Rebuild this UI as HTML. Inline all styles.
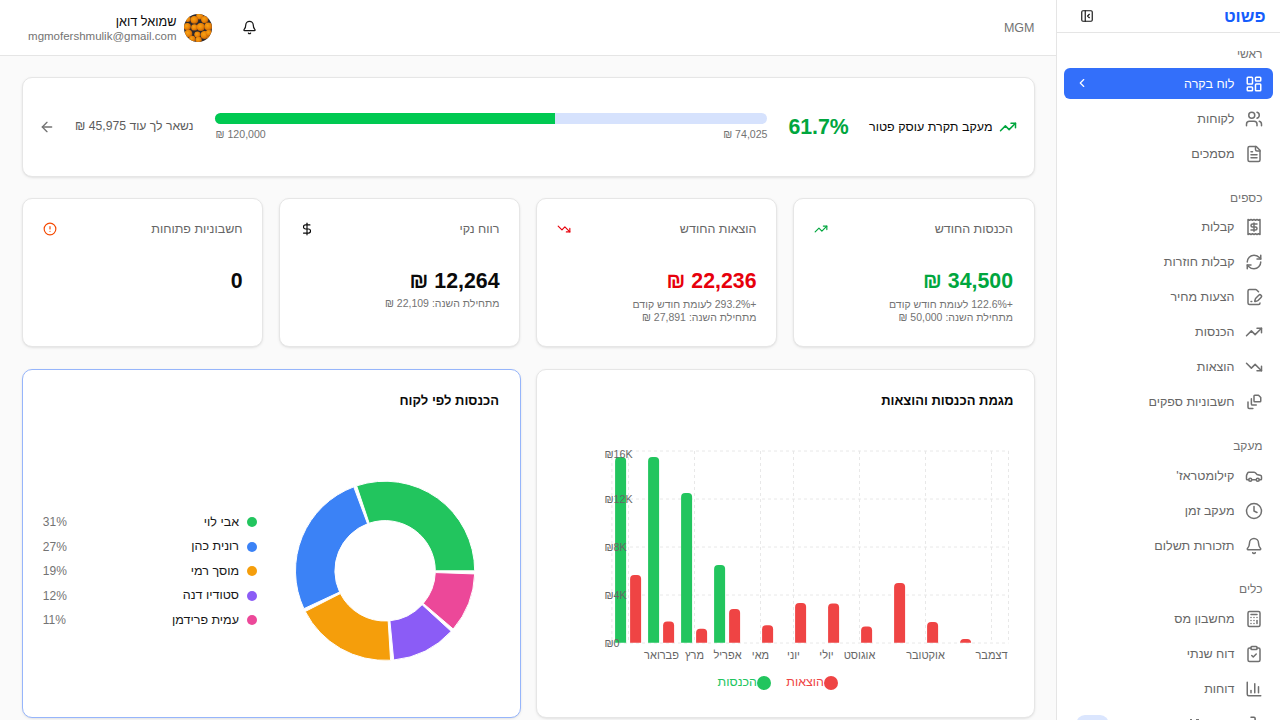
<!DOCTYPE html>
<html lang="he"><head><meta charset="utf-8"><title>פשוט - לוח בקרה</title>
<style>
html,body{margin:0;padding:0;width:1280px;height:720px;overflow:hidden;background:#fafafa;font-family:"Liberation Sans", sans-serif}
.t{position:absolute;white-space:nowrap}
svg text{font-family:"Liberation Sans", sans-serif}
</style></head><body>
<div style="position:absolute;left:0px;top:0px;width:1056px;height:55px;background:#fff;border-bottom:1px solid #e5e5e5"></div><div class="t" dir="ltr" style="right:245.50px;top:22.25px;font-size:12.5px;line-height:12.5px;color:#737373;font-weight:400;">MGM</div><svg style="position:absolute;left:241.50px;top:20.30px" width="15" height="15" viewBox="0 0 24 24" fill="none" stroke="#171717" stroke-width="2" stroke-linecap="round" stroke-linejoin="round"><path d="M10.268 21a2 2 0 0 0 3.464 0"/><path d="M3.262 15.326A1 1 0 0 0 4 17h16a1 1 0 0 0 .74-1.673C19.41 13.956 18 12.499 18 8A6 6 0 0 0 6 8c0 4.499-1.411 5.956-2.738 7.326"/></svg><div style="position:absolute;left:184px;top:14px;width:28px;height:28px;border-radius:50%;overflow:hidden"><svg width="28" height="28" viewBox="0 0 28 28"><defs><radialGradient id="og" cx="40%" cy="40%" r="65%"><stop offset="0" stop-color="#f8a414"/><stop offset="0.6" stop-color="#e98208"/><stop offset="1" stop-color="#b55a06"/></radialGradient></defs><rect width="28" height="28" fill="#2c2a2e"/><circle cx="15.8" cy="2" r="3.6" fill="url(#og)"/><circle cx="10.4" cy="5.8" r="3.9" fill="url(#og)"/><circle cx="20.7" cy="5.6" r="3.6" fill="url(#og)"/><circle cx="3.8" cy="5.1" r="3" fill="url(#og)"/><circle cx="3.3" cy="12.6" r="3.6" fill="url(#og)"/><circle cx="10.4" cy="13.4" r="3.2" fill="url(#og)"/><circle cx="16.8" cy="13" r="4" fill="url(#og)"/><circle cx="24.4" cy="12.4" r="4" fill="url(#og)"/><circle cx="4.4" cy="19.6" r="3.9" fill="url(#og)"/><circle cx="13.4" cy="20.6" r="3.1" fill="url(#og)"/><circle cx="20.6" cy="21" r="4" fill="url(#og)"/><circle cx="8.2" cy="25" r="3.2" fill="url(#og)"/><circle cx="14.6" cy="26" r="3.2" fill="url(#og)"/><circle cx="25" cy="19" r="3.2" fill="url(#og)"/><circle cx="26" cy="25" r="3" fill="url(#og)"/></svg></div><div class="t" dir="rtl" style="right:1103.50px;top:16.02px;font-size:12.7px;line-height:12.7px;color:#0a0a0a;font-weight:400;">שמואל דואן</div><div class="t" dir="ltr" style="right:1103.50px;top:30.84px;font-size:11.5px;line-height:11.5px;color:#737373;font-weight:400;">mgmofershmulik@gmail.com</div><div style="position:absolute;left:1056px;top:0px;width:224px;height:720px;background:#fff;border-left:1px solid #e5e5e5;box-sizing:border-box"></div><div style="position:absolute;left:1057px;top:32px;width:223px;height:1px;background:#e5e5e5"></div><div class="t" dir="rtl" style="right:14.50px;top:8.35px;font-size:17px;line-height:17px;color:#155dfc;font-weight:700;">פשוט</div><svg style="position:absolute;left:1080.00px;top:8.90px" width="14" height="14" viewBox="0 0 24 24" fill="none" stroke="#171717" stroke-width="2" stroke-linecap="round" stroke-linejoin="round"><rect width="18" height="18" x="3" y="3" rx="2"/><path d="M9 3v18"/><path d="m16 15-3-3 3-3"/></svg><div class="t" dir="rtl" style="right:17.50px;top:48.20px;font-size:12px;line-height:12px;color:#737373;font-weight:400;">ראשי</div><div style="position:absolute;left:1064px;top:68.3px;width:209px;height:31px;background:#336ffa;border-radius:6px"></div><svg style="position:absolute;left:1244.70px;top:74.80px" width="18" height="18" viewBox="0 0 24 24" fill="none" stroke="#fff" stroke-width="2" stroke-linecap="round" stroke-linejoin="round"><rect width="7" height="9" x="3" y="3" rx="1"/><rect width="7" height="5" x="14" y="3" rx="1"/><rect width="7" height="9" x="14" y="12" rx="1"/><rect width="7" height="5" x="3" y="16" rx="1"/></svg><div class="t" dir="rtl" style="right:45.50px;top:77.62px;font-size:12.5px;line-height:12.5px;color:#fff;font-weight:400;">לוח בקרה</div><svg style="position:absolute;left:1075.00px;top:76.00px" width="14" height="14" viewBox="0 0 24 24" fill="none" stroke="#fff" stroke-width="2" stroke-linecap="round" stroke-linejoin="round"><path d="m15 18-6-6 6-6"/></svg><svg style="position:absolute;left:1244.70px;top:110.00px" width="18" height="18" viewBox="0 0 24 24" fill="none" stroke="#707070" stroke-width="2" stroke-linecap="round" stroke-linejoin="round"><path d="M16 21v-2a4 4 0 0 0-4-4H6a4 4 0 0 0-4 4v2"/><circle cx="9" cy="7" r="4"/><path d="M22 21v-2a4 4 0 0 0-3-3.87"/><path d="M16 3.13a4 4 0 0 1 0 7.75"/></svg><div class="t" dir="rtl" style="right:45.50px;top:112.83px;font-size:12.5px;line-height:12.5px;color:#666;font-weight:400;">לקוחות</div><svg style="position:absolute;left:1244.70px;top:145.00px" width="18" height="18" viewBox="0 0 24 24" fill="none" stroke="#707070" stroke-width="2" stroke-linecap="round" stroke-linejoin="round"><path d="M15 2H6a2 2 0 0 0-2 2v16a2 2 0 0 0 2 2h12a2 2 0 0 0 2-2V7Z"/><path d="M14 2v4a2 2 0 0 0 2 2h4"/><path d="M10 9H8"/><path d="M16 13H8"/><path d="M16 17H8"/></svg><div class="t" dir="rtl" style="right:45.50px;top:147.82px;font-size:12.5px;line-height:12.5px;color:#666;font-weight:400;">מסמכים</div><div class="t" dir="rtl" style="right:17.50px;top:191.60px;font-size:12px;line-height:12px;color:#737373;font-weight:400;">כספים</div><svg style="position:absolute;left:1244.70px;top:217.80px" width="18" height="18" viewBox="0 0 24 24" fill="none" stroke="#707070" stroke-width="2" stroke-linecap="round" stroke-linejoin="round"><path d="M4 2v20l2-1 2 1 2-1 2 1 2-1 2 1 2-1 2 1V2l-2 1-2-1-2 1-2-1-2 1-2-1-2 1Z"/><path d="M16 8h-6a2 2 0 1 0 0 4h4a2 2 0 1 1 0 4H8"/><path d="M12 17.5v-11"/></svg><div class="t" dir="rtl" style="right:45.50px;top:220.62px;font-size:12.5px;line-height:12.5px;color:#666;font-weight:400;">קבלות</div><svg style="position:absolute;left:1244.70px;top:252.80px" width="18" height="18" viewBox="0 0 24 24" fill="none" stroke="#707070" stroke-width="2" stroke-linecap="round" stroke-linejoin="round"><path d="M3 12a9 9 0 0 1 9-9 9.75 9.75 0 0 1 6.74 2.74L21 8"/><path d="M21 3v5h-5"/><path d="M21 12a9 9 0 0 1-9 9 9.75 9.75 0 0 1-6.74-2.74L3 16"/><path d="M8 16H3v5"/></svg><div class="t" dir="rtl" style="right:45.50px;top:255.62px;font-size:12.5px;line-height:12.5px;color:#666;font-weight:400;">קבלות חוזרות</div><svg style="position:absolute;left:1244.70px;top:287.80px" width="18" height="18" viewBox="0 0 24 24" fill="none" stroke="#707070" stroke-width="2" stroke-linecap="round" stroke-linejoin="round"><path d="m18 5-2.414-2.414A2 2 0 0 0 14.172 2H6a2 2 0 0 0-2 2v16a2 2 0 0 0 2 2h12a2 2 0 0 0 2-2"/><path d="M21.378 12.626a1 1 0 0 0-3.004-3.004l-4.01 4.012a2 2 0 0 0-.506.854l-.837 2.87a.5.5 0 0 0 .62.62l2.87-.837a2 2 0 0 0 .854-.506z"/><path d="M8 18h1"/></svg><div class="t" dir="rtl" style="right:45.50px;top:290.62px;font-size:12.5px;line-height:12.5px;color:#666;font-weight:400;">הצעות מחיר</div><svg style="position:absolute;left:1244.70px;top:322.80px" width="18" height="18" viewBox="0 0 24 24" fill="none" stroke="#707070" stroke-width="2" stroke-linecap="round" stroke-linejoin="round"><polyline points="22 7 13.5 15.5 8.5 10.5 2 17"/><polyline points="16 7 22 7 22 13"/></svg><div class="t" dir="rtl" style="right:45.50px;top:325.62px;font-size:12.5px;line-height:12.5px;color:#666;font-weight:400;">הכנסות</div><svg style="position:absolute;left:1244.70px;top:357.80px" width="18" height="18" viewBox="0 0 24 24" fill="none" stroke="#707070" stroke-width="2" stroke-linecap="round" stroke-linejoin="round"><polyline points="22 17 13.5 8.5 8.5 13.5 2 7"/><polyline points="16 17 22 17 22 11"/></svg><div class="t" dir="rtl" style="right:45.50px;top:360.62px;font-size:12.5px;line-height:12.5px;color:#666;font-weight:400;">הוצאות</div><svg style="position:absolute;left:1244.70px;top:392.80px" width="18" height="18" viewBox="0 0 24 24" fill="none" stroke="#707070" stroke-width="2" stroke-linecap="round" stroke-linejoin="round"><path d="M13 3h5l3 3v4.5a1 1 0 0 1-1 1h-7a1 1 0 0 1-1-1V4a1 1 0 0 1 1-1z"/><path d="M8.5 7.5v7a1.5 1.5 0 0 0 1.5 1.5H15"/><path d="M4 12v7a1.5 1.5 0 0 0 1.5 1.5H10.5"/></svg><div class="t" dir="rtl" style="right:45.50px;top:395.62px;font-size:12.5px;line-height:12.5px;color:#666;font-weight:400;">חשבוניות ספקים</div><div class="t" dir="rtl" style="right:17.50px;top:440.30px;font-size:12px;line-height:12px;color:#737373;font-weight:400;">מעקב</div><svg style="position:absolute;left:1244.70px;top:467.00px" width="18" height="18" viewBox="0 0 24 24" fill="none" stroke="#707070" stroke-width="2" stroke-linecap="round" stroke-linejoin="round"><path d="M19 17h2c.6 0 1-.4 1-1v-3c0-.9-.7-1.7-1.5-1.9C18.7 10.6 16 10 16 10s-1.3-1.4-2.2-2.3c-.5-.4-1.1-.7-1.8-.7H5c-.6 0-1.1.4-1.4.9l-1.4 2.9A3.7 3.7 0 0 0 2 12v4c0 .6.4 1 1 1h2"/><circle cx="7" cy="17" r="2"/><path d="M9 17h6"/><circle cx="17" cy="17" r="2"/></svg><div class="t" dir="rtl" style="right:45.50px;top:469.82px;font-size:12.5px;line-height:12.5px;color:#666;font-weight:400;">קילומטראז'</div><svg style="position:absolute;left:1244.70px;top:501.80px" width="18" height="18" viewBox="0 0 24 24" fill="none" stroke="#707070" stroke-width="2" stroke-linecap="round" stroke-linejoin="round"><circle cx="12" cy="12" r="10"/><polyline points="12 6 12 12 16 14"/></svg><div class="t" dir="rtl" style="right:45.50px;top:504.62px;font-size:12.5px;line-height:12.5px;color:#666;font-weight:400;">מעקב זמן</div><svg style="position:absolute;left:1244.70px;top:536.80px" width="18" height="18" viewBox="0 0 24 24" fill="none" stroke="#707070" stroke-width="2" stroke-linecap="round" stroke-linejoin="round"><path d="M10.268 21a2 2 0 0 0 3.464 0"/><path d="M3.262 15.326A1 1 0 0 0 4 17h16a1 1 0 0 0 .74-1.673C19.41 13.956 18 12.499 18 8A6 6 0 0 0 6 8c0 4.499-1.411 5.956-2.738 7.326"/></svg><div class="t" dir="rtl" style="right:45.50px;top:539.62px;font-size:12.5px;line-height:12.5px;color:#666;font-weight:400;">תזכורות תשלום</div><div class="t" dir="rtl" style="right:17.50px;top:583.30px;font-size:12px;line-height:12px;color:#737373;font-weight:400;">כלים</div><svg style="position:absolute;left:1244.70px;top:610.00px" width="18" height="18" viewBox="0 0 24 24" fill="none" stroke="#707070" stroke-width="2" stroke-linecap="round" stroke-linejoin="round"><rect width="16" height="20" x="4" y="2" rx="2"/><line x1="8" x2="16" y1="6" y2="6"/><line x1="16" x2="16" y1="14" y2="18"/><path d="M16 10h.01"/><path d="M12 10h.01"/><path d="M8 10h.01"/><path d="M12 14h.01"/><path d="M8 14h.01"/><path d="M12 18h.01"/><path d="M8 18h.01"/></svg><div class="t" dir="rtl" style="right:45.50px;top:612.83px;font-size:12.5px;line-height:12.5px;color:#666;font-weight:400;">מחשבון מס</div><svg style="position:absolute;left:1244.70px;top:645.00px" width="18" height="18" viewBox="0 0 24 24" fill="none" stroke="#707070" stroke-width="2" stroke-linecap="round" stroke-linejoin="round"><rect width="8" height="4" x="8" y="2" rx="1" ry="1"/><path d="M16 4h2a2 2 0 0 1 2 2v14a2 2 0 0 1-2 2H6a2 2 0 0 1-2-2V6a2 2 0 0 1 2-2h2"/><path d="m9 14 2 2 4-4"/></svg><div class="t" dir="rtl" style="right:45.50px;top:647.83px;font-size:12.5px;line-height:12.5px;color:#666;font-weight:400;">דוח שנתי</div><svg style="position:absolute;left:1244.70px;top:680.00px" width="18" height="18" viewBox="0 0 24 24" fill="none" stroke="#707070" stroke-width="2" stroke-linecap="round" stroke-linejoin="round"><path d="M3 3v16a2 2 0 0 0 2 2h16"/><path d="M18 17V9"/><path d="M13 17V5"/><path d="M8 17v-3"/></svg><div class="t" dir="rtl" style="right:45.50px;top:682.83px;font-size:12.5px;line-height:12.5px;color:#666;font-weight:400;">דוחות</div><svg style="position:absolute;left:1244.7px;top:715px" width="18" height="18" viewBox="0 0 24 24" fill="none" stroke="#6b6b6b" stroke-width="2" stroke-linecap="round"><path d="M8 3h4a1.5 1.5 0 0 1 1.5 1.5v4"/></svg><div style="position:absolute;left:1190px;top:718.6px;width:2px;height:2px;background:#777"></div><div style="position:absolute;left:1195.5px;top:718.6px;width:3.5px;height:2px;background:#777"></div><div style="position:absolute;left:1076px;top:715px;width:33px;height:18px;background:#dbe6fe;border-radius:9px"></div><div style="position:absolute;left:21.5px;top:77px;width:1013px;height:99.5px;background:#fff;border:1px solid #e6e6e6;border-radius:10px;box-shadow:0 1px 3px 0 rgba(0,0,0,.08),0 1px 2px -1px rgba(0,0,0,.08);box-sizing:border-box"></div><svg style="position:absolute;left:999.00px;top:118.00px" width="18" height="18" viewBox="0 0 24 24" fill="none" stroke="#00a63e" stroke-width="2" stroke-linecap="round" stroke-linejoin="round"><polyline points="22 7 13.5 15.5 8.5 10.5 2 17"/><polyline points="16 7 22 7 22 13"/></svg><div class="t" dir="rtl" style="right:287.50px;top:120.62px;font-size:12.5px;line-height:12.5px;color:#0a0a0a;font-weight:400;">מעקב תקרת עוסק פטור</div><div class="t" dir="ltr" style="right:431.20px;top:117.25px;font-size:21.3px;line-height:21.3px;color:#00a63e;font-weight:700;">61.7%</div><div style="position:absolute;left:215px;top:113px;width:552px;height:11px;background:#d6e2fd;border-radius:6px;overflow:hidden"></div><div style="position:absolute;left:215px;top:113px;width:340.2px;height:11px;background:#00c951;border-radius:6px 0 0 6px"></div><div class="t" dir="rtl" style="right:512.50px;top:128.70px;font-size:10.6px;line-height:10.6px;color:#737373;font-weight:400;">74,025 ₪</div><div class="t" dir="rtl" style="left:215.50px;top:128.70px;font-size:10.6px;line-height:10.6px;color:#737373;font-weight:400;">120,000 ₪</div><div class="t" dir="rtl" style="right:1086.50px;top:120.19px;font-size:12.2px;line-height:12.2px;color:#5c5c5c;font-weight:400;">נשאר לך עוד 45,975 ₪</div><svg style="position:absolute;left:38.70px;top:119.00px" width="16" height="16" viewBox="0 0 24 24" fill="none" stroke="#737373" stroke-width="2" stroke-linecap="round" stroke-linejoin="round"><path d="m12 19-7-7 7-7"/><path d="M19 12H5"/></svg><div style="position:absolute;left:21.5px;top:198px;width:241.5px;height:148.5px;background:#fff;border:1px solid #e6e6e6;border-radius:10px;box-shadow:0 1px 3px 0 rgba(0,0,0,.08),0 1px 2px -1px rgba(0,0,0,.08);box-sizing:border-box"></div><div style="position:absolute;left:278.5px;top:198px;width:241.5px;height:148.5px;background:#fff;border:1px solid #e6e6e6;border-radius:10px;box-shadow:0 1px 3px 0 rgba(0,0,0,.08),0 1px 2px -1px rgba(0,0,0,.08);box-sizing:border-box"></div><div style="position:absolute;left:535.5px;top:198px;width:241.5px;height:148.5px;background:#fff;border:1px solid #e6e6e6;border-radius:10px;box-shadow:0 1px 3px 0 rgba(0,0,0,.08),0 1px 2px -1px rgba(0,0,0,.08);box-sizing:border-box"></div><div style="position:absolute;left:793px;top:198px;width:241.5px;height:148.5px;background:#fff;border:1px solid #e6e6e6;border-radius:10px;box-shadow:0 1px 3px 0 rgba(0,0,0,.08),0 1px 2px -1px rgba(0,0,0,.08);box-sizing:border-box"></div><div class="t" dir="rtl" style="right:267.00px;top:222.62px;font-size:12.5px;line-height:12.5px;color:#666;font-weight:400;">הכנסות החודש</div><svg style="position:absolute;left:814.25px;top:221.60px" width="14" height="14" viewBox="0 0 24 24" fill="none" stroke="#00a63e" stroke-width="2" stroke-linecap="round" stroke-linejoin="round"><polyline points="22 7 13.5 15.5 8.5 10.5 2 17"/><polyline points="16 7 22 7 22 13"/></svg><div class="t" dir="rtl" style="right:267.00px;top:271.45px;font-size:21.3px;line-height:21.3px;color:#00a63e;font-weight:700;">34,500 ₪</div><div class="t" dir="rtl" style="right:267.00px;top:298.73px;font-size:10.5px;line-height:10.5px;color:#737373;font-weight:400;">+122.6% לעומת חודש קודם</div><div class="t" dir="rtl" style="right:267.00px;top:312.23px;font-size:10.5px;line-height:10.5px;color:#737373;font-weight:400;">מתחילת השנה: 50,000 ₪</div><div class="t" dir="rtl" style="right:523.50px;top:222.62px;font-size:12.5px;line-height:12.5px;color:#666;font-weight:400;">הוצאות החודש</div><svg style="position:absolute;left:557.10px;top:222.00px" width="14" height="14" viewBox="0 0 24 24" fill="none" stroke="#e7000b" stroke-width="2" stroke-linecap="round" stroke-linejoin="round"><polyline points="22 17 13.5 8.5 8.5 13.5 2 7"/><polyline points="16 17 22 17 22 11"/></svg><div class="t" dir="rtl" style="right:523.50px;top:271.45px;font-size:21.3px;line-height:21.3px;color:#e7000b;font-weight:700;">22,236 ₪</div><div class="t" dir="rtl" style="right:523.50px;top:298.73px;font-size:10.5px;line-height:10.5px;color:#737373;font-weight:400;">+293.2% לעומת חודש קודם</div><div class="t" dir="rtl" style="right:523.50px;top:312.23px;font-size:10.5px;line-height:10.5px;color:#737373;font-weight:400;">מתחילת השנה: 27,891 ₪</div><div class="t" dir="rtl" style="right:780.50px;top:222.62px;font-size:12.5px;line-height:12.5px;color:#666;font-weight:400;">רווח נקי</div><svg style="position:absolute;left:300.00px;top:222.00px" width="14" height="14" viewBox="0 0 24 24" fill="none" stroke="#0a0a0a" stroke-width="2" stroke-linecap="round" stroke-linejoin="round"><line x1="12" x2="12" y1="2" y2="22"/><path d="M17 5H9.5a3.5 3.5 0 0 0 0 7h5a3.5 3.5 0 0 1 0 7H6"/></svg><div class="t" dir="rtl" style="right:780.50px;top:271.35px;font-size:21.3px;line-height:21.3px;color:#0a0a0a;font-weight:700;">12,264 ₪</div><div class="t" dir="rtl" style="right:780.50px;top:298.43px;font-size:10.5px;line-height:10.5px;color:#737373;font-weight:400;">מתחילת השנה: 22,109 ₪</div><div class="t" dir="rtl" style="right:1037.50px;top:222.62px;font-size:12.5px;line-height:12.5px;color:#666;font-weight:400;">חשבוניות פתוחות</div><svg style="position:absolute;left:43.10px;top:222.00px" width="14" height="14" viewBox="0 0 24 24" fill="none" stroke="#f54900" stroke-width="2" stroke-linecap="round" stroke-linejoin="round"><circle cx="12" cy="12" r="10"/><line x1="12" x2="12" y1="8" y2="12"/><line x1="12" x2="12.01" y1="16" y2="16"/></svg><div class="t" dir="rtl" style="right:1037.50px;top:271.35px;font-size:21.3px;line-height:21.3px;color:#0a0a0a;font-weight:700;">0</div><div style="position:absolute;left:21.5px;top:368.5px;width:499px;height:349px;background:#fff;border:1px solid #96b5fb;border-radius:10px;box-shadow:0 1px 3px 0 rgba(0,0,0,.08),0 1px 2px -1px rgba(0,0,0,.08);box-sizing:border-box"></div><div style="position:absolute;left:535.5px;top:368.5px;width:499px;height:349px;background:#fff;border:1px solid #e6e6e6;border-radius:10px;box-shadow:0 1px 3px 0 rgba(0,0,0,.08),0 1px 2px -1px rgba(0,0,0,.08);box-sizing:border-box"></div><div class="t" dir="rtl" style="right:781.00px;top:394.35px;font-size:13px;line-height:13px;color:#0a0a0a;font-weight:700;">הכנסות לפי לקוח</div><div class="t" dir="rtl" style="right:266.50px;top:394.45px;font-size:13px;line-height:13px;color:#0a0a0a;font-weight:700;">מגמת הכנסות והוצאות</div><svg style="position:absolute;left:0;top:0" width="1280" height="720"><path d="M474.70,570.80 A89.6,89.6 0 0 0 356.67,485.83 L369.17,523.19 A50.2,50.2 0 0 1 435.30,570.80 Z" fill="#22c55e" stroke="#fff" stroke-width="1"/><path d="M353.72,486.87 A89.6,89.6 0 0 0 303.89,608.67 L339.60,592.02 A50.2,50.2 0 0 1 367.52,523.78 Z" fill="#3b82f6" stroke="#fff" stroke-width="1"/><path d="M305.27,611.48 A89.6,89.6 0 0 0 390.57,660.23 L388.16,620.91 A50.2,50.2 0 0 1 340.37,593.59 Z" fill="#f59e0b" stroke="#fff" stroke-width="1"/><path d="M393.69,659.99 A89.6,89.6 0 0 0 451.16,631.33 L422.11,604.71 A50.2,50.2 0 0 1 389.91,620.77 Z" fill="#8b5cf6" stroke="#fff" stroke-width="1"/><path d="M453.23,628.99 A89.6,89.6 0 0 0 474.65,573.93 L435.27,572.55 A50.2,50.2 0 0 1 423.27,603.40 Z" fill="#ec4899" stroke="#fff" stroke-width="1"/></svg><div style="position:absolute;left:247px;top:517.0px;width:10px;height:10px;background:#22c55e;border-radius:50%"></div><div class="t" dir="rtl" style="right:1041.00px;top:515.92px;font-size:12.5px;line-height:12.5px;color:#171717;font-weight:400;">אבי לוי</div><div class="t" dir="ltr" style="left:42.80px;top:516.00px;font-size:12px;line-height:12px;color:#737373;font-weight:400;">31%</div><div style="position:absolute;left:247px;top:541.5px;width:10px;height:10px;background:#3b82f6;border-radius:50%"></div><div class="t" dir="rtl" style="right:1041.00px;top:540.42px;font-size:12.5px;line-height:12.5px;color:#171717;font-weight:400;">רונית כהן</div><div class="t" dir="ltr" style="left:42.80px;top:540.50px;font-size:12px;line-height:12px;color:#737373;font-weight:400;">27%</div><div style="position:absolute;left:247px;top:566.0px;width:10px;height:10px;background:#f59e0b;border-radius:50%"></div><div class="t" dir="rtl" style="right:1041.00px;top:564.92px;font-size:12.5px;line-height:12.5px;color:#171717;font-weight:400;">מוסך רמי</div><div class="t" dir="ltr" style="left:42.80px;top:565.00px;font-size:12px;line-height:12px;color:#737373;font-weight:400;">19%</div><div style="position:absolute;left:247px;top:590.5px;width:10px;height:10px;background:#8b5cf6;border-radius:50%"></div><div class="t" dir="rtl" style="right:1041.00px;top:589.42px;font-size:12.5px;line-height:12.5px;color:#171717;font-weight:400;">סטודיו דנה</div><div class="t" dir="ltr" style="left:42.80px;top:589.50px;font-size:12px;line-height:12px;color:#737373;font-weight:400;">12%</div><div style="position:absolute;left:247px;top:615.0px;width:10px;height:10px;background:#ec4899;border-radius:50%"></div><div class="t" dir="rtl" style="right:1041.00px;top:613.92px;font-size:12.5px;line-height:12.5px;color:#171717;font-weight:400;">עמית פרידמן</div><div class="t" dir="ltr" style="left:42.80px;top:614.00px;font-size:12px;line-height:12px;color:#737373;font-weight:400;">11%</div><svg style="position:absolute;left:0;top:0" width="1280" height="720"><line x1="612" x2="1008.5" y1="451" y2="451" stroke="#e8e8e8" stroke-dasharray="3 3"/><line x1="612" x2="1008.5" y1="499" y2="499" stroke="#e8e8e8" stroke-dasharray="3 3"/><line x1="612" x2="1008.5" y1="547" y2="547" stroke="#e8e8e8" stroke-dasharray="3 3"/><line x1="612" x2="1008.5" y1="595" y2="595" stroke="#e8e8e8" stroke-dasharray="3 3"/><line x1="612" x2="1008.5" y1="643" y2="643" stroke="#e8e8e8" stroke-dasharray="3 3"/><line x1="611.9" x2="611.9" y1="451" y2="643" stroke="#e8e8e8" stroke-dasharray="3 3"/><line x1="628.5" x2="628.5" y1="451" y2="643" stroke="#e8e8e8" stroke-dasharray="3 3"/><line x1="694.5" x2="694.5" y1="451" y2="643" stroke="#e8e8e8" stroke-dasharray="3 3"/><line x1="760.5" x2="760.5" y1="451" y2="643" stroke="#e8e8e8" stroke-dasharray="3 3"/><line x1="793.5" x2="793.5" y1="451" y2="643" stroke="#e8e8e8" stroke-dasharray="3 3"/><line x1="859.5" x2="859.5" y1="451" y2="643" stroke="#e8e8e8" stroke-dasharray="3 3"/><line x1="925.5" x2="925.5" y1="451" y2="643" stroke="#e8e8e8" stroke-dasharray="3 3"/><line x1="991.5" x2="991.5" y1="451" y2="643" stroke="#e8e8e8" stroke-dasharray="3 3"/><line x1="1008.5" x2="1008.5" y1="451" y2="643" stroke="#e8e8e8" stroke-dasharray="3 3"/><path d="M615.1,642.8 V461.00 Q615.1,457.00 619.1,457.00 H622.1 Q626.1,457.00 626.1,461.00 V642.8 Z" fill="#22c55e"/><path d="M630.1,642.8 V579.00 Q630.1,575.00 634.1,575.00 H637.1 Q641.1,575.00 641.1,579.00 V642.8 Z" fill="#ef4444"/><path d="M648.1,642.8 V461.00 Q648.1,457.00 652.1,457.00 H655.1 Q659.1,457.00 659.1,461.00 V642.8 Z" fill="#22c55e"/><path d="M663.1,642.8 V625.60 Q663.1,621.60 667.1,621.60 H670.1 Q674.1,621.60 674.1,625.60 V642.8 Z" fill="#ef4444"/><path d="M681.1,642.8 V497.00 Q681.1,493.00 685.1,493.00 H688.1 Q692.1,493.00 692.1,497.00 V642.8 Z" fill="#22c55e"/><path d="M696.1,642.8 V632.70 Q696.1,628.70 700.1,628.70 H703.1 Q707.1,628.70 707.1,632.70 V642.8 Z" fill="#ef4444"/><path d="M714.1,642.8 V569.00 Q714.1,565.00 718.1,565.00 H721.1 Q725.1,565.00 725.1,569.00 V642.8 Z" fill="#22c55e"/><path d="M729.1,642.8 V613.10 Q729.1,609.10 733.1,609.10 H736.1 Q740.1,609.10 740.1,613.10 V642.8 Z" fill="#ef4444"/><path d="M762.1,642.8 V629.20 Q762.1,625.20 766.1,625.20 H769.1 Q773.1,625.20 773.1,629.20 V642.8 Z" fill="#ef4444"/><path d="M795.1,642.8 V607.00 Q795.1,603.00 799.1,603.00 H802.1 Q806.1,603.00 806.1,607.00 V642.8 Z" fill="#ef4444"/><path d="M828.1,642.8 V607.60 Q828.1,603.60 832.1,603.60 H835.1 Q839.1,603.60 839.1,607.60 V642.8 Z" fill="#ef4444"/><path d="M861.1,642.8 V630.40 Q861.1,626.40 865.1,626.40 H868.1 Q872.1,626.40 872.1,630.40 V642.8 Z" fill="#ef4444"/><path d="M894.1,642.8 V586.90 Q894.1,582.90 898.1,582.90 H901.1 Q905.1,582.90 905.1,586.90 V642.8 Z" fill="#ef4444"/><path d="M927.1,642.8 V625.90 Q927.1,621.90 931.1,621.90 H934.1 Q938.1,621.90 938.1,625.90 V642.8 Z" fill="#ef4444"/><path d="M960.1,642.8 V642.80 Q960.1,639.00 963.9,639.00 H967.3000000000001 Q971.1,639.00 971.1,642.80 V642.8 Z" fill="#ef4444"/><text x="604.5" y="458.2" font-size="10.7" fill="#666" font-family='"Liberation Sans", sans-serif'>₪16K</text><text x="604.5" y="503.2" font-size="10.7" fill="#666" font-family='"Liberation Sans", sans-serif'>₪12K</text><text x="604.5" y="551.2" font-size="10.7" fill="#666" font-family='"Liberation Sans", sans-serif'>₪8K</text><text x="604.5" y="599.2" font-size="10.7" fill="#666" font-family='"Liberation Sans", sans-serif'>₪4K</text><text x="604.5" y="647.0" font-size="10.7" fill="#666" font-family='"Liberation Sans", sans-serif'>₪0</text><text x="661.5" y="659" font-size="11" fill="#666" text-anchor="middle" direction="rtl" unicode-bidi="plaintext" font-family='"Liberation Sans", sans-serif'>פברואר</text><text x="694.5" y="659" font-size="11" fill="#666" text-anchor="middle" direction="rtl" unicode-bidi="plaintext" font-family='"Liberation Sans", sans-serif'>מרץ</text><text x="727.5" y="659" font-size="11" fill="#666" text-anchor="middle" direction="rtl" unicode-bidi="plaintext" font-family='"Liberation Sans", sans-serif'>אפריל</text><text x="760.5" y="659" font-size="11" fill="#666" text-anchor="middle" direction="rtl" unicode-bidi="plaintext" font-family='"Liberation Sans", sans-serif'>מאי</text><text x="793.5" y="659" font-size="11" fill="#666" text-anchor="middle" direction="rtl" unicode-bidi="plaintext" font-family='"Liberation Sans", sans-serif'>יוני</text><text x="826.5" y="659" font-size="11" fill="#666" text-anchor="middle" direction="rtl" unicode-bidi="plaintext" font-family='"Liberation Sans", sans-serif'>יולי</text><text x="859.5" y="659" font-size="11" fill="#666" text-anchor="middle" direction="rtl" unicode-bidi="plaintext" font-family='"Liberation Sans", sans-serif'>אוגוסט</text><text x="925.5" y="659" font-size="11" fill="#666" text-anchor="middle" direction="rtl" unicode-bidi="plaintext" font-family='"Liberation Sans", sans-serif'>אוקטובר</text><text x="991.5" y="659" font-size="11" fill="#666" text-anchor="middle" direction="rtl" unicode-bidi="plaintext" font-family='"Liberation Sans", sans-serif'>דצמבר</text></svg><div style="position:absolute;left:757px;top:676px;width:14px;height:14px;background:#22c55e;border-radius:50%"></div><div style="position:absolute;left:824px;top:676px;width:14px;height:14px;background:#ef4444;border-radius:50%"></div><div class="t" dir="rtl" style="right:523.00px;top:676.02px;font-size:12.5px;line-height:12.5px;color:#22c55e;font-weight:400;">הכנסות</div><div class="t" dir="rtl" style="right:456.00px;top:676.02px;font-size:12.5px;line-height:12.5px;color:#ef4444;font-weight:400;">הוצאות</div>
</body></html>
